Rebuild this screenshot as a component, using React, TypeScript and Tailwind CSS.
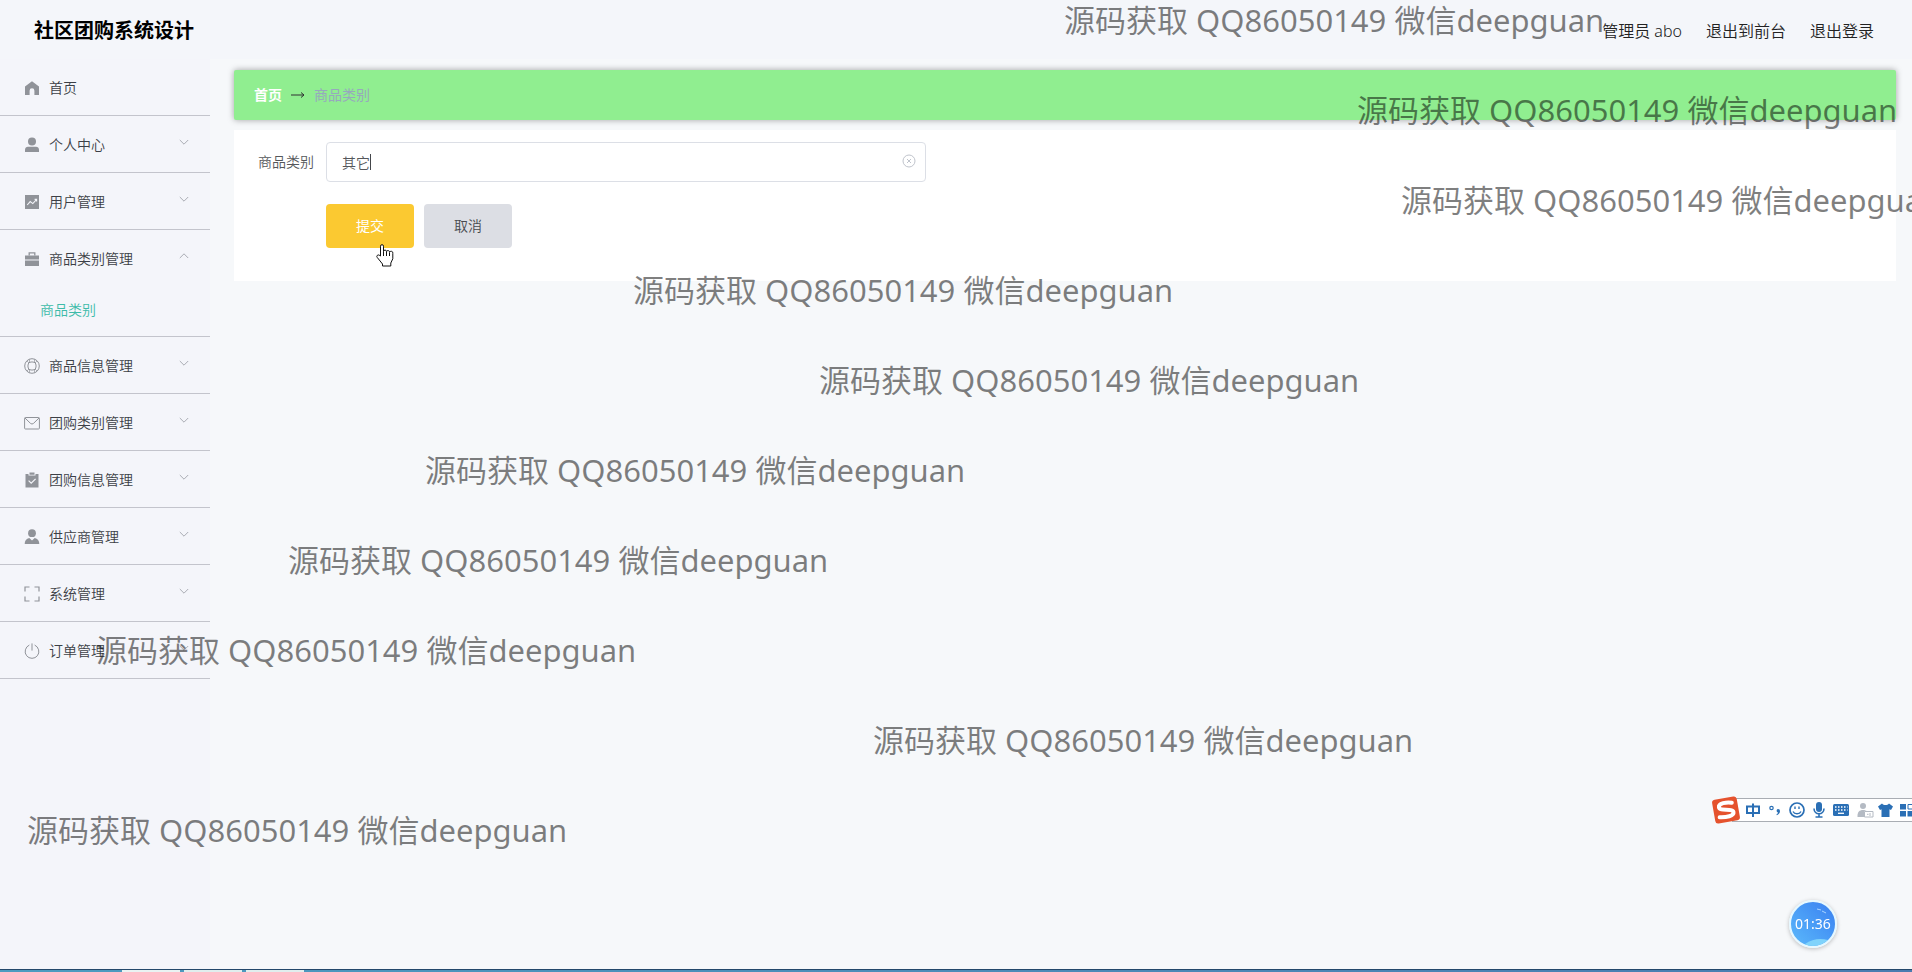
import React, { useState } from 'react';

type IconName =
  | 'home'
  | 'user'
  | 'chart'
  | 'case'
  | 'ring'
  | 'mail'
  | 'clipboard'
  | 'person'
  | 'frame'
  | 'power';

interface MenuEntry {
  name: string;
  icon: IconName;
  children?: string[];
}

const MENU: MenuEntry[] = [
  { name: '首页', icon: 'home' },
  { name: '个人中心', icon: 'user', children: ['修改密码', '个人信息'] },
  { name: '用户管理', icon: 'chart', children: ['用户'] },
  { name: '商品类别管理', icon: 'case', children: ['商品类别'] },
  { name: '商品信息管理', icon: 'ring', children: ['商品信息'] },
  { name: '团购类别管理', icon: 'mail', children: ['团购类别'] },
  { name: '团购信息管理', icon: 'clipboard', children: ['团购信息'] },
  { name: '供应商管理', icon: 'person', children: ['供应商'] },
  { name: '系统管理', icon: 'frame', children: ['轮播图管理'] },
  { name: '订单管理', icon: 'power', children: ['订单'] },
];

// Floating marks, one every 90px down the page
const MARKS = [
  { x: 1064, y: 0 },
  { x: 1357, y: 90 },
  { x: 1401, y: 180 },
  { x: 633, y: 270 },
  { x: 819, y: 360 },
  { x: 425, y: 450 },
  { x: 288, y: 540 },
  { x: 96, y: 630 },
  { x: 873, y: 720 },
  { x: 27, y: 810 },
];

const MenuIcon: React.FC<{ name: IconName }> = ({ name }) => {
  const shapes: Record<IconName, React.ReactNode> = {
    home: <path fill="currentColor" d="M8 1.2 1 6.6V15h4.6v-4.3a2.4 2.4 0 0 1 4.8 0V15H15V6.6z" />,
    user: (
      <g fill="currentColor">
        <circle cx="8" cy="4.6" r="4" />
        <path d="M1 15v-2.2c0-1.8 1.3-3 3-3h8c1.700 0 3 1.200 3 3V15z" />
      </g>
    ),
    chart: (
      <>
        <path fill="currentColor" d="M1 1h14v14H1z" />
        <path fill="none" stroke="#f4f5fa" strokeWidth="1.100" d="m3.200 11 3-3.400 2.600 2L12.400 5.600M10.600 5.400h2v2" />
      </>
    ),
    case: (
      <>
        <path fill="none" stroke="currentColor" strokeWidth="1.300" d="M5.200 4.500V1.800h5.600v2.700" />
        <path fill="currentColor" d="M1 4.400h14v4H1zM1 9.400h14V15H1z" />
      </>
    ),
    ring: (
      <g fill="none" stroke="currentColor" strokeWidth="1">
        <circle cx="8" cy="8" r="7.300" />
        <rect x="4" y="4" width="8" height="8" rx="3" />
        <path d="M5 5 3 3M11 5l2-2M5 11l-2 2M11 11l2 2M5.500 1.200v3M10.500 1.200v3M5.500 11.800v3M10.500 11.800v3" strokeWidth=".7" />
      </g>
    ),
    mail: (
      <g fill="none" stroke="currentColor" strokeWidth="1">
        <rect x=".6" y="2.500" width="14.800" height="11.500" rx=".8" />
        <path d="m1 3 5.400 5.300a2.300 2.300 0 0 0 3.200 0L15 3" />
      </g>
    ),
    clipboard: (
      <>
        <path fill="currentColor" d="M1.500 2h3v1.600h7V2h3v13.500h-13zM5.500.6h5v2.200h-5z" />
        <path fill="none" stroke="#f4f5fa" strokeWidth="1.200" d="m4.600 8.600 2.600 2.600L11.600 6.800" />
      </>
    ),
    person: (
      <g fill="currentColor">
        <circle cx="8" cy="4.200" r="3.900" />
        <path d="M.7 15c0-3.600 1.600-5.400 4.600-6.100L8 11.500l2.700-2.600c3 .7 4.600 2.500 4.600 6.100z" />
      </g>
    ),
    frame: (
      <path
        fill="none"
        stroke="currentColor"
        strokeWidth="1.200"
        d="M1 5.500V1h4.500M10.500 1H15v4.500M15 10.500V15h-4.500M5.500 15H1v-4.500"
      />
    ),
    power: (
      <path
        fill="none"
        stroke="currentColor"
        strokeWidth="1"
        strokeLinecap="round"
        d="M5 2.200a6.900 6.900 0 1 0 6 0M8 .8v6.400"
      />
    ),
  };

  return (
    <svg viewBox="0 0 16 16" className="size-4 shrink-0 text-[#909399]" aria-hidden="true">
      {shapes[name]}
    </svg>
  );
};

const Chevron: React.FC<{ open: boolean }> = ({ open }) => (
  <svg viewBox="0 0 10 10" className="ml-auto mb-1.5 size-2.5 text-[#a9acb3]" aria-hidden="true">
    <path fill="none" stroke="currentColor" d={open ? 'M.8 7 5 2.800 9.200 7' : 'M.8 3 5 7.200 9.200 3'} />
  </svg>
);

const Sidebar: React.FC = () => {
  const [opened, setOpened] = useState('商品类别管理');

  return (
    <nav className="w-[210px] shrink-0 bg-[#f4f5fa]">
      <ul>
        {MENU.map(item => {
          const open = opened === item.name;
          return (
            <li key={item.name} className="border-b border-[#c3c4cc]">
              <button
                type="button"
                className="flex h-14 w-full items-center gap-[9px] pt-0.5 pr-[21px] pl-6 text-left text-sm text-[#3c3f46]"
                onClick={() => setOpened(open ? '' : item.name)}
              >
                <MenuIcon name={item.icon} />
                <span>{item.name}</span>
                {item.children && <Chevron open={open} />}
              </button>
              {open &&
                item.children?.map(child => (
                  <a key={child} href="#" className="flex h-[50px] items-center pb-0.5 pl-10 text-sm text-[#3dbba9]">
                    {child}
                  </a>
                ))}
            </li>
          );
        })}
      </ul>
    </nav>
  );
};

const CategoryForm: React.FC = () => {
  const [category, setCategory] = useState('其它');

  return (
    <form className="bg-white px-6 pt-3 pb-[33px]" onSubmit={e => e.preventDefault()}>
      <div className="flex items-center gap-3">
        <label htmlFor="category" className="w-14 text-sm text-[#55575b]">
          商品类别
        </label>
        <div className="relative w-[600px]">
          <input
            id="category"
            type="text"
            value={category}
            onChange={e => setCategory(e.target.value)}
            className="h-10 w-full rounded border border-[#dcdfe6] bg-white pr-8 pl-[15px] text-sm text-[#55575b] outline-none"
          />
          <span className="absolute top-3 left-11 h-4 w-px bg-[#44464a]" />
          <button type="button" aria-label="清空" className="absolute top-3 right-2.5" onClick={() => setCategory('')}>
            <svg viewBox="0 0 14 14" className="size-3.5 text-[#c0c4cc]">
              <circle cx="7" cy="7" r="6" fill="none" stroke="currentColor" />
              <path fill="none" stroke="currentColor" d="m5 5 4 4M9 5 5 9" />
            </svg>
          </button>
        </div>
      </div>
      <div className="mt-[22px] flex gap-2.5 pl-[68px]">
        <button type="submit" className="relative h-11 w-[88px] rounded bg-[#fbc931] text-sm font-normal text-white">
          提交
          <svg viewBox="0 0 18 23" className="absolute top-10 left-[50px] h-[23px] w-[18px]" aria-hidden="true">
            <path
              fill="#fff"
              stroke="#111"
              strokeLinejoin="round"
              d="M4.500 12V2.200a1.500 1.500 0 0 1 3 0V7.500a1.500 1.500 0 0 1 3 .2 1.500 1.500 0 0 1 3 .8 1.600 1.600 0 0 1 3.300 1v5.300L14.800 19v3H6.500v-2L1.200 13.400a1.500 1.500 0 0 1 2-2.200z"
            />
            <path stroke="#111" d="M7.500 7.500V12M10.500 8v4M13.500 9v3" />
          </svg>
        </button>
        <button type="button" className="h-11 w-[88px] rounded bg-[#dcdee4] text-sm text-[#484a4f]">
          取消
        </button>
      </div>
    </form>
  );
};

const ImeBar: React.FC = () => (
  <div className="fixed right-0 bottom-[150px] flex h-6 w-[180px] items-center border-y border-[#a9adb3] bg-white">
    <svg viewBox="0 0 202 24" className="absolute left-[-20px] h-6 w-[202px] overflow-visible text-[#2a6fb5]" aria-hidden="true">
      {/* logo tile */}
      <g transform="rotate(-10 14 12)">
        <rect x="1.500" y="0" width="25" height="24" rx="3" fill="#e5522d" />
        <path
          fill="none"
          stroke="#fff"
          strokeWidth="4"
          strokeLinecap="round"
          d="M21 5.800C16 4 7.500 4 7.500 8.200c0 4.200 13.500 2.800 13.500 7.200 0 4-8 4-14.500 2.600"
        />
      </g>
      <g transform="translate(-1 0)">
        {/* input mode */}
        <path fill="none" stroke="currentColor" strokeWidth="2" d="M36 8.500h12v6.500H36zM42 5.500V19" />
        {/* punctuation */}
        <circle cx="60.500" cy="10" r="1.700" fill="none" stroke="currentColor" strokeWidth="1.200" />
        <path fill="currentColor" d="M67 11a2 2 0 0 1 2 2c0 2-1.200 3.600-3.200 4.200l-.3-1c1-.4 1.500-1 1.500-1.700a1.800 1.800 0 0 1 0-3.500z" />
        {/* emoji */}
        <circle cx="86" cy="12" r="7" fill="none" stroke="currentColor" strokeWidth="1.700" />
        <path fill="none" stroke="currentColor" strokeWidth="1.400" d="M84 8.500v2.500M88 8.500v2.500M82 13.500c1.500 3 6.500 3 8 0" />
        {/* voice */}
        <rect x="105" y="4" width="6" height="10" rx="3" fill="currentColor" />
        <path fill="none" stroke="currentColor" strokeWidth="1.600" d="M103 10.500c0 7 10 7 10 0M108 16v3M104.500 19h7" />
        {/* keyboard */}
        <rect x="122" y="6" width="16" height="12" rx="1.500" fill="currentColor" />
        <path stroke="#fff" strokeWidth="1.500" strokeDasharray="1.500 1.500" d="M124 9h12.500M124 12h12.500" />
        <path stroke="#fff" strokeWidth="1.300" d="M127 15.300h6" />
        {/* account */}
        <g fill="#b4bac3">
          <circle cx="152" cy="8" r="3" />
          <path d="M146.500 18c0-4 2-6 5.500-6 2 0 3 .5 4 1.500h-3V19h-6.500z" />
        </g>
        <path fill="#fff" stroke="#b4bac3" d="M153.500 13.500h8.500v5.500h-8.500zM156 16.300h1.500M159 15v3" />
        {/* skin */}
        <path fill="currentColor" d="m171 5.500-4 3 2 3.500 1.500-.8V19h8v-7.800l1.500.8 2-3.500-4-3c-1.800 2-5.200 2-7 0z" />
        {/* toolbox */}
        <path fill="currentColor" d="M189 6h6v5.500h-6zM189 13h6v5.500h-6zM196.500 13h7v5.500h-7z" />
        <path fill="none" stroke="currentColor" d="M197 6.500h6v4.500h-6z" />
      </g>
    </svg>
  </div>
);

const TimerBall: React.FC = () => (
  <div className="fixed right-[75px] bottom-6 flex size-12 items-center justify-center overflow-hidden rounded-full border-2 border-[#e6f8ff] bg-linear-to-tr from-[#5cb9fb] to-[#3b7ff0] text-sm font-normal text-white shadow-[0_1px_4px_rgba(0,0,0,0.25)]">
    <svg viewBox="0 0 44 44" className="absolute inset-0 size-full" aria-hidden="true">
      <path fill="#7fd3fb" d="M14 42c7-5 15-6 23-4l-6 6H14z" />
      <path fill="none" stroke="#a9d4ff" d="m26 7 4 1M31 9l4 2" />
    </svg>
    <span className="relative">01:36</span>
  </div>
);

const App: React.FC = () => {
  return (
    <div className="relative flex min-h-screen flex-col overflow-x-hidden bg-[#f6f8fa] font-['Noto_Sans','Noto_Sans_CJK_SC',sans-serif] font-[350]">
      <header className="flex h-[59px] items-center justify-between bg-[#f4f6fa] pt-0.5 pr-[38px] pl-[34px]">
        <h1 className="text-xl font-bold text-black">社区团购系统设计</h1>
        <div className="flex items-center gap-6 text-base text-[#222]">
          <span>管理员 abo</span>
          <a href="#">退出到前台</a>
          <a href="#">退出登录</a>
        </div>
      </header>

      <div className="flex flex-1">
        <Sidebar />
        <main className="min-w-0 flex-1 pt-[11px] pr-4 pl-6">
          <div className="mb-2.5 flex h-[50px] items-center gap-2 rounded-xs bg-[#90ee90] px-5 text-sm shadow-[0_0_6px_rgba(0,0,0,0.35)]">
            <a href="#" className="font-bold text-white">
              首页
            </a>
            <svg viewBox="0 0 14 10" className="h-2.5 w-4 text-[#303133]" aria-hidden="true">
              <path fill="none" stroke="currentColor" d="M0 5h13M10 2.500 13 5l-3 2.500" />
            </svg>
            <span className="font-normal text-[#97a8be]">商品类别</span>
          </div>
          <CategoryForm />
        </main>
      </div>

      <div className="pointer-events-none absolute inset-0 overflow-hidden" aria-hidden="true">
        {MARKS.map(mark => (
          <span
            key={mark.y}
            className="absolute text-[31px] leading-10 font-normal whitespace-nowrap text-black/50"
            style={{ left: mark.x, top: mark.y }}
          >
            源码获取 QQ86050149 微信deepguan
          </span>
        ))}
      </div>

      <ImeBar />
      <TimerBall />

      {/* top edge of the desktop taskbar */}
      <div className="fixed inset-x-0 bottom-0 flex h-[3px] border-t border-[#24486b] bg-linear-to-r from-[#4c9cc0] to-[#4a7cb0]">
        <div className="ml-[122px] flex gap-1">
          <span className="w-[58px] bg-[#e9f3f3]" />
          <span className="w-[58px] bg-[#e0eeee]" />
          <span className="w-[58px] bg-[#e0eeee]" />
        </div>
      </div>
    </div>
  );
};

export default App;
